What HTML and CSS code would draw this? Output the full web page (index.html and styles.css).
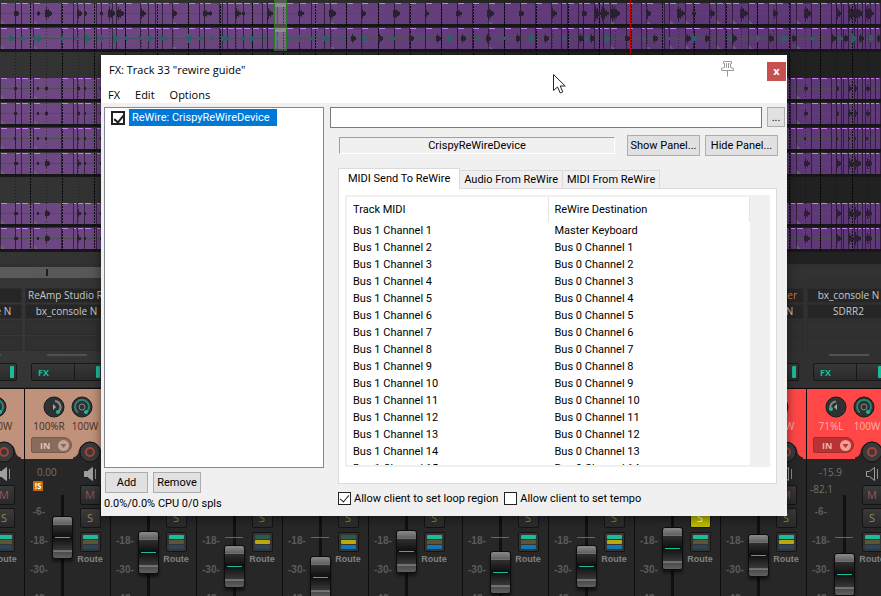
FILE: index.html
```html
<!DOCTYPE html>
<html lang="en">
<head>
    <meta charset="UTF-8">
    <meta name="viewport" content="width=device-width, initial-scale=1.0">
    <title>FX: Track 33</title>
    <link rel="stylesheet" href="styles.css">
</head>
<body>
    <div class="daw">
        <div class="arrange" id="arrange">
            <div class="loop-marker"></div>
            <div class="playhead"></div>
        </div>
        <div class="scrollbar"><div class="scroll-mark"></div></div>
        <div class="mixer" id="mixer"></div>
    </div>

    <div class="window">
        <div class="titlebar">
            <span class="title">FX: Track 33 "rewire guide"</span>
            <svg class="pin" width="15" height="16" viewBox="0 0 15 16" fill="#fff" stroke="#999">
                <path d="M3.5 0.5h8v2h-1v4l3 1v2h-12v-2l3-1v-4h-1z"/>
                <path d="M7.5 9.5v6M6.5 2v5M8.5 2v5"/>
            </svg>
            <button class="close" type="button" aria-label="Close">x</button>
        </div>
        <div class="menu">
            <span>FX</span>
            <span>Edit</span>
            <span>Options</span>
        </div>
        <div class="content">
            <div class="chain">
                <div class="fx-list">
                    <label class="fx-item">
                        <input class="fx-check" type="checkbox" checked>
                        <span class="fx-name">ReWire: CrispyReWireDevice</span>
                    </label>
                </div>
                <div class="chain-buttons">
                    <button class="btn" type="button">Add</button>
                    <button class="btn" type="button">Remove</button>
                </div>
                <div class="cpu">0.0%/0.0% CPU 0/0 spls</div>
            </div>
            <div class="plugin">
                <div class="preset-row">
                    <input class="preset" type="text" aria-label="Preset">
                    <button class="btn more" type="button">...</button>
                </div>
                <div class="device-row">
                    <div class="device">CrispyReWireDevice</div>
                    <button class="btn panel-btn" type="button">Show Panel...</button>
                    <button class="btn panel-btn" type="button">Hide Panel...</button>
                </div>
                <div class="tabs">
                    <button class="tab active" type="button">MIDI Send To ReWire</button>
                    <button class="tab" type="button">Audio From ReWire</button>
                    <button class="tab" type="button">MIDI From ReWire</button>
                </div>
                <div class="tab-page">
                    <div class="list-view">
                        <table class="routing">
                            <thead>
                                <tr><th>Track MIDI</th><th>ReWire Destination</th></tr>
                            </thead>
                            <tbody id="routing"></tbody>
                        </table>
                    </div>
                </div>
                <div class="options">
                    <label class="option"><input class="option-check" type="checkbox" checked>Allow client to set loop region</label>
                    <label class="option"><input class="option-check" type="checkbox">Allow client to set tempo</label>
                </div>
            </div>
        </div>
    </div>

    <svg class="cursor" width="13" height="20" viewBox="0 0 13 20">
        <path d="M0.5 0.5v16l4-3.5 2.7 6 2.6-1.2-2.6-5.8h5z" fill="#fff" stroke="#222"/>
    </svg>

    <script src="script.js"></script>
</body>
</html>
```
FILE: styles.css
```css
* {
    box-sizing: border-box;
}

body {
    margin: 0;
    background-color: #272727;
    font-family: Roboto, "Liberation Sans", sans-serif;
    font-size: 11px;
    overflow: hidden;
}

button, input {
    font: inherit;
    margin: 0;
}

.daw {
    position: relative;
    display: flex;
    flex-direction: column;
    min-height: 100vh;
}

/* Tracks */
.arrange {
    position: relative;
    padding-top: 3px;
    padding-bottom: 11px;
    background: linear-gradient(90deg, #343434, #2c2c2c 40%, #212121 65%);
}

.lane {
    display: block;
    width: 100%;
    height: 25px;
}

.loop-marker {
    position: absolute;
    left: 274px;
    top: 0;
    width: 13px;
    height: 51px;
    border-left: 1px solid #2c7a26;
    border-right: 1px solid #2c7a26;
    background:
        linear-gradient(#8c8c8c, #8c8c8c) 0 3px / 100% 4px no-repeat,
        linear-gradient(#8c8c8c, #8c8c8c) 0 28px / 100% 4px no-repeat,
        rgba(190, 190, 180, 0.3);
}

.playhead {
    position: absolute;
    left: 630px;
    top: 0;
    width: 1px;
    height: 55px;
    background-color: #c00000;
}

.scrollbar {
    height: 14px;
    padding: 5px 0 0 46px;
    border-top: 3px solid #303030;
    background: linear-gradient(90deg, #5b5b5b, #4a4a4a 50%, #323232 80%);
}

.scroll-mark {
    width: 2px;
    height: 7px;
    margin-top: -3px;
    background-color: #1e1e1e;
}

/* Mixer */
.mixer {
    display: flex;
    flex: 1;
    height: 318px;
    margin-left: -62px;
    overflow: hidden;
    background: linear-gradient(90deg, #363636, #303030) top / 100% 110px no-repeat #272727;
    font-family: "Open Sans", "Noto Sans", sans-serif;
}

.strip {
    flex: none;
    width: 86px;
}

.strip.gap {
    width: 94px;
    padding-left: 8px;
}

.inserts {
    height: 110px;
    padding: 10px 2px 0 1px;
    border-bottom: 1px solid #2c2c2c;
}

.slot {
    height: 15px;
    margin-bottom: 1px;
    padding: 0 2px;
    border: 1px solid #2d2d2d;
    background-color: #262626;
    color: #c8c8c8;
    font-size: 10px;
    line-height: 13px;
    text-align: center;
    white-space: nowrap;
    overflow: hidden;
}

.slot.empty {
    background-color: #303030;
}

.slot.offline {
    padding-right: 6px;
    color: #d0803c;
    text-align: right;
}

.send-bar {
    width: 40px;
    height: 2px;
    margin: 3px 0 7px 22px;
    background-color: #505050;
}

.fx-button {
    display: flex;
    align-items: center;
    width: 72px;
    height: 18px;
    margin-left: 6px;
    padding: 0 2px 0 6px;
    border: 1px solid #181818;
    border-radius: 2px;
    background: linear-gradient(90deg, transparent 42px, #181818 42px, #181818 43px, transparent 43px), linear-gradient(#383838, #2a2a2a);
    color: #1abc9c;
    font-size: 9px;
    font-weight: bold;
}

.fx-led {
    width: 4px;
    height: 12px;
    margin-left: auto;
    border-radius: 1px;
    background-color: #1abc9c;
}

.head {
    height: 71px;
    padding: 7px 0 0 6px;
    border-top: 1px solid #0c0c0c;
    border-left: 1px solid #0c0c0c;
    background-color: #c0927b;
    color: #4a2d1e;
}

.head.red {
    background-color: #ff4747;
    color: #ffb0a8;
}

.knobs {
    display: flex;
    gap: 6px;
    margin-left: 12px;
}

.knob {
    display: block;
    width: 22px;
    height: 22px;
}

.knob-labels {
    display: flex;
    width: 72px;
    font-size: 10px;
    line-height: 16px;
    white-space: nowrap;
}

.knob-labels span {
    flex: 1;
    text-align: center;
}

.head-bottom {
    display: flex;
    align-items: flex-start;
}

.input-button {
    display: flex;
    align-items: center;
    justify-content: space-between;
    width: 41px;
    height: 16px;
    margin-top: 3px;
    padding: 0 2px 0 8px;
    border: 1px solid #76594c;
    border-radius: 2px 8px 8px 2px;
    background-color: #8a6a5a;
    color: #dcc4b8;
    font-size: 9px;
    font-weight: bold;
}

.red .input-button {
    border-color: #9a2c2c;
    background-color: #b83434;
    color: #f0b0a8;
}

.record {
    display: block;
    flex: none;
    width: 34px;
    height: 30px;
    margin: 4px 0 0 1px;
}

.channel {
    display: flex;
    height: 137px;
    padding-top: 1px;
    border-left: 1px solid #0e0e0e;
}

.meter {
    width: 27px;
    padding-top: 4px;
    color: #5c5c5c;
    font-size: 9px;
}

.volume, .peak {
    height: 16px;
    padding-left: 12px;
    font-size: 10px;
    line-height: 16px;
    color: #707070;
    white-space: nowrap;
}

.peak {
    padding-left: 3px;
}

.solo-badge {
    display: block;
    width: 10px;
    height: 10px;
    margin-left: 8px;
    border-radius: 1px;
    background-color: #c46a08;
    color: #fff;
    font-size: 8px;
    font-weight: bold;
    line-height: 10px;
    text-align: center;
}

.warn {
    height: 26px;
    padding-top: 1px;
}

.tick {
    height: 29px;
    padding-left: 5px;
    font-family: "Liberation Sans", sans-serif;
    font-size: 10px;
    font-weight: bold;
    line-height: 12px;
    white-space: nowrap;
}

.fader-column {
    position: relative;
    width: 21px;
    margin-top: 35px;
    background: linear-gradient(#101010, #101010) center / 3px 100% no-repeat;
}

.unity {
    position: absolute;
    left: 1px;
    top: 42px;
    width: 18px;
    height: 1px;
    background-color: #666;
}

.fader {
    position: absolute;
    left: 0;
    width: 21px;
    height: 43px;
    border: 1px solid #0c0c0c;
    border-radius: 3px;
    background:
        linear-gradient(#1abc9c, #1abc9c) center 20px / 15px 1px no-repeat,
        linear-gradient(#8a8a8a 0, #606060 7px, #b0b0b0 7px, #2f2f2f 8px, #0f0f0f 20px, #383838 33px, #a0a0a0 34px, #4a4a4a 35px, #606060 100%);
    box-shadow: 0 3px 3px rgba(0, 0, 0, 0.5);
}

.controls {
    display: flex;
    flex-direction: column;
    align-items: center;
    width: 34px;
    padding-top: 7px;
}

.speaker {
    display: block;
    width: 13px;
    height: 14px;
    margin-bottom: 4px;
}

.square {
    width: 21px;
    height: 20px;
    margin-bottom: 3px;
    padding: 0;
    border: 1px solid #141414;
    border-radius: 2px;
    background: linear-gradient(#3a3a3a, #2a2a2a);
    font-size: 11px;
    line-height: 16px;
}

.mute {
    color: #94545a;
}

.solo {
    color: #908a48;
}

.solo.on {
    background: #bcbc00;
    color: #fff;
}

.route {
    display: flex;
    flex-direction: column;
    gap: 1px;
    width: 21px;
    height: 20px;
    margin: 1px 0 0;
    padding: 2px;
    border: 1px solid #141414;
    border-radius: 2px;
    background-color: #343434;
}

.route i {
    display: block;
    width: 15px;
    height: 4px;
    border-radius: 1px;
}

.teal { background-color: #1abc9c; }
.teal-dim { background-color: #2c5a4e; }
.yellow { background-color: #bca80e; }
.yellow-dim { background-color: #5c5634; }
.blue { background-color: #0e78b8; }
.blue-dim { background-color: #2a4658; }

.route-label {
    color: #828282;
    font-family: "Liberation Sans", sans-serif;
    font-size: 9px;
    font-weight: bold;
    line-height: 14px;
}

/* FX window */
.window {
    position: absolute;
    left: 101px;
    top: 55px;
    width: 686px;
    background-color: #f0f0f0;
    color: #000;
    box-shadow: 0 2px 10px rgba(0, 0, 0, 0.5);
}

.titlebar {
    display: flex;
    align-items: center;
    height: 30px;
    padding: 0 1px 0 8px;
    background-color: #fff;
    font-family: "Open Sans", "Noto Sans", sans-serif;
}

.title {
    flex: 1;
    padding-bottom: 1px;
}

.pin {
    margin: 0 32px 2px 0;
}

.close {
    width: 19px;
    height: 19px;
    margin-top: 3px;
    padding: 0 0 2px;
    border: none;
    background-color: #c75050;
    color: #fff;
    font-weight: bold;
    line-height: 16px;
}

.menu {
    display: flex;
    gap: 15px;
    height: 18px;
    padding-left: 7px;
    background-color: #fff;
    font-family: "Open Sans", "Noto Sans", sans-serif;
    line-height: 20px;
}

.content {
    display: grid;
    grid-template-columns: 220px 1fr;
    gap: 6px;
    padding: 4px 2px 3px 3px;
}

.chain {
    display: flex;
    flex-direction: column;
}

.fx-list {
    height: 361px;
    padding: 1px 6px;
    border: 1px solid #828790;
    background-color: #fff;
}

.fx-item {
    display: flex;
    align-items: center;
    gap: 4px;
}

.fx-check, .option-check {
    appearance: none;
    flex: none;
    width: 13px;
    height: 13px;
    border: 1px solid #222;
    background-color: #fff;
}

.fx-check {
    width: 14px;
    height: 14px;
    border: 2px solid #222;
}

.fx-check:checked::before, .option-check:checked::before {
    content: "";
    display: block;
    width: 4px;
    height: 8px;
    margin: 0 0 0 3px;
    border: solid #222;
    border-width: 0 1px 1px 0;
    transform: rotate(40deg);
}

.fx-check:checked::before {
    border-width: 0 2px 2px 0;
}

.fx-name {
    padding: 0 7px 0 3px;
    background-color: #0078d7;
    color: #fff;
    line-height: 17px;
}

.chain-buttons {
    display: flex;
    gap: 5px;
    margin: 4px 0 2px 1px;
}

.btn {
    height: 21px;
    padding: 0;
    border: 1px solid #adadad;
    background-color: #e1e1e1;
    color: #000;
    text-align: center;
}

.chain-buttons .btn {
    width: 43px;
}

.chain-buttons .btn:last-child {
    width: 48px;
}

.cpu {
    line-height: 18px;
}

.preset-row {
    display: flex;
    gap: 5px;
}

.preset {
    flex: 1;
    height: 21px;
    border: 1px solid #7a7a7a;
    background-color: #fff;
}

.more {
    width: 18px;
    height: 20px;
}

.device-row {
    display: flex;
    align-items: center;
    gap: 5px;
    padding: 7px 7px 0 9px;
}

.device {
    flex: 1;
    margin-right: 7px;
    border: 1px solid;
    border-color: #a0a0a0 #fff #fff #a0a0a0;
    line-height: 15px;
    text-align: center;
}

.panel-btn {
    width: 73px;
}

.tabs {
    display: flex;
    align-items: flex-end;
    margin: 12px 0 0 8px;
}

.tab {
    height: 18px;
    padding: 0 4px;
    border: 1px solid #dadada;
    border-bottom: none;
    border-left: none;
    background-color: #f0f0f0;
    color: #000;
}

.tab.active {
    height: 21px;
    margin-bottom: -1px;
    padding: 0 9px 2px;
    border-left: 1px solid #dadada;
    background-color: #fff;
    z-index: 1;
}

.tab-page {
    margin: 0 8px;
    padding: 6px 6px 16px;
    border: 1px solid #dadada;
    background-color: #fff;
}

.list-view {
    height: 272px;
    padding-right: 18px;
    border: 2px solid #f0f0f0;
    background: linear-gradient(#f0f0f0, #f0f0f0) right / 18px 100% no-repeat #fff;
    overflow: hidden;
}

.routing {
    width: 100%;
    table-layout: fixed;
    border-spacing: 0;
}

.routing th {
    height: 25px;
    padding: 0 6px;
    border-right: 1px solid #e5e5e5;
    font-weight: normal;
    text-align: left;
}

.routing td {
    height: 17px;
    padding: 0 6px 1px;
}

.options {
    display: flex;
    gap: 6px;
    margin: 8px 0 0 8px;
}

.option {
    display: flex;
    align-items: center;
    gap: 3px;
}

.cursor {
    position: absolute;
    left: 553px;
    top: 74px;
}
```
FILE: script.js
```js
// Bus / channel table
const rows = [];
for (let i = 1; i <= 15; i++) {
    const dest = i === 1 ? 'Master Keyboard' : `Bus 0 Channel ${i - 1}`;
    rows.push(`<tr><td>Bus 1 Channel ${i}</td><td>${dest}</td></tr>`);
}
document.getElementById('routing').innerHTML = rows.join('');

// Item edges shared by all the grouped tracks
const cuts = [0, 15, 21, 33, 61, 73, 77, 84, 96, 101, 112, 116, 125, 140, 148, 155, 162, 172, 188, 199, 204, 219, 222, 227, 235, 243, 252, 262, 267, 277, 286, 299, 311, 324, 330, 346, 361, 378, 394, 409, 425, 441, 457, 472, 488, 504, 520, 535, 551, 561, 567, 578, 583, 594, 599, 603, 610, 626, 641, 646, 664, 669, 685, 693, 709, 716, 725, 732, 748, 757, 768, 776, 790, 796, 811, 820, 831, 836, 841, 843, 848, 854, 857, 862, 865, 870, 875, 880];
const fades = [0, 33, 172, 330, 488, 610, 646, 669, 685, 716, 732, 748, 796];
const hits = [[15, 4], [38, 2], [46, 6], [78, 4], [85, 2], [101, 2], [109, 6], [118, 6], [141, 5], [173, 4], [204, 5], [210, 2], [236, 5], [243, 2], [268, 5], [299, 5], [330, 6], [362, 4], [394, 6], [426, 3], [457, 5], [488, 6], [520, 4], [552, 5], [583, 4], [595, 7], [602, 7], [612, 8], [647, 4], [678, 7], [693, 3], [711, 4], [741, 7], [774, 4], [805, 7], [837, 5], [849, 7], [855, 8], [867, 7]];
const tealHits = [10, 22, 34, 38, 62, 75, 86, 98, 101, 114, 126, 139, 149, 160, 165, 188, 200, 211, 223, 228, 242, 251, 264, 276, 286, 299, 312, 325, 341, 352, 363, 379, 392, 410, 421, 437, 449, 462, 478, 487, 503, 517, 530, 545, 563, 580, 586, 591, 606, 626, 643, 654, 667, 687, 693, 706, 730, 733, 757, 770, 783, 793, 812, 832, 840, 845, 852, 860, 870, 878];

function wave(x, amp) {
    let d = '';
    for (let i = -1; i < amp; i++) {
        const h = Math.max(1, Math.round((amp - Math.abs(i)) * (i % 2 ? 0.6 : 1)));
        d += `M${x + i + 0.5} ${10 - h}v${h * 2 + 1}`;
    }
    return d;
}

function grid(height) {
    let out = '';
    for (let i = 0; i < 56; i++) {
        const x = Math.round(14.5 + i * 15.8) + 0.5;
        const major = i % 2;
        out += `<path d="M${x} 0V${height}" stroke="#000" stroke-opacity="${major ? 0.9 : 0.4}" stroke-dasharray="${major ? '2 1' : '1 2'}"/>`;
    }
    return out;
}

function lane(type) {
    if (type === 'blank') {
        return `<svg class="lane">${grid(25)}</svg>`;
    }
    const scale = { full: 1, teal: 0, small: 0.4, flat: 0.1, mid: 0.7 }[type];
    let lines = '', tops = '', w = '', t = '', tri = '';
    cuts.forEach((x, i) => {
        lines += `M${x + 0.5} 0v22`;
        const len = Math.min(6, (cuts[i + 1] || x + 6) - x - 2);
        tops += `M${x + 1} 0.5h${Math.max(len, 2)}`;
    });
    fades.forEach(x => { tri += `M${x} 16l5 5h-5z`; });
    if (type === 'teal') {
        tealHits.forEach((x, i) => {
            if (x > 330 && i % 2) w += wave(x, 4);
            else t += wave(x, i % 3 ? 3 : 4);
        });
    } else {
        hits.forEach(([x, a]) => { w += wave(x, Math.max(1, Math.round(a * scale))); });
    }
    return `<svg class="lane">
        <rect width="100%" height="24" fill="#171717"/>
        <rect width="100%" height="21" fill="url(#clip)"/>
        <path d="M0 10.5H4000" stroke="#4c5050"/>
        <path d="${tri}" fill="#777" fill-opacity="0.6"/>
        <path d="${lines}" stroke="#150c1a" stroke-opacity="0.6"/>
        ${grid(24)}
        <path d="${t}" stroke="#2b6068"/>
        <path d="${w}" stroke="#2a2030"/>
        <path d="${tops}" stroke="#c57df0"/>
    </svg>`;
}

const lanes = ['full', 'teal', 'blank', 'small', 'small', 'flat', 'mid', 'blank', 'mid', 'mid'];
document.getElementById('arrange').insertAdjacentHTML('afterbegin',
    `<svg width="0" height="0" style="position:absolute"><defs><linearGradient id="clip" gradientUnits="userSpaceOnUse" x1="0" x2="600">
        <stop stop-color="#6d4883"/><stop offset="0.4" stop-color="#6a4580"/><stop offset="1" stop-color="#5f3878"/>
    </linearGradient></defs></svg>` + lanes.map(lane).join(''));

// Mixer strips: route is teal / yellow / blue, 1 when lit
const strips = [
    { slots: ['', 'bx_console N'], route: [1, 0, 0], skip: 1 },
    { slots: ['ReAmp Studio Rack', 'bx_console N'], fader: 21, pan: '100%R', vol: '0.00', badge: 1, route: [1, 0, 0] },
    { slots: ['', ''], fader: 36, route: [1, 0, 0] },
    { slots: ['', ''], fader: 50, route: [0, 1, 0] },
    { slots: ['', ''], fader: 61, route: [0, 1, 1] },
    { slots: ['', ''], fader: 35, route: [1, 0, 1] },
    { slots: ['', ''], fader: 56, route: [1, 0, 1], gap: 1 },
    { slots: ['', ''], fader: 50, route: [1, 1, 1] },
    { slots: ['', ''], fader: 32, route: [1, 0, 0], solo: 1 },
    { slots: ['er', 'bx_console N'], fader: 39, route: [1, 1, 0], red: 1, outline: 1 },
    { slots: ['bx_console N', 'SDRR2'], fader: 58, pan: '71%L', vol: '-15.9', peak: '-82.1', route: [1, 0, 0], red: 1, outline: 1, left: 1 }
];

function strip(s) {
    const colors = ['teal', 'yellow', 'blue'];
    const route = s.route.map((on, i) => `<i class="${colors[i]}${on ? '' : '-dim'}"></i>`).join('');
    const slots = s.slots.map(n => `<div class="slot${n === 'er' ? ' offline' : ''}">${n}</div>`).join('');
    const tan = s.red ? '#f0a098' : '#c4a494';
    const warn = s.peak ? `<div class="peak">${s.peak}</div>` : s.badge ? '<span class="solo-badge">!S</span>' : '';
    const pan = s.left
        ? '<path d="M5.5 13a6 6 0 0 1 5.500-7.500" fill="none" stroke="#888" stroke-width="2"/><circle cx="6" cy="13" r="2" fill="#1abc9c"/><path d="M12 8v6l-3-3z" fill="#aaa"/>'
        : '<path d="M12 5a6 6 0 0 1 4 10" fill="none" stroke="#888" stroke-width="2"/><circle cx="15" cy="16" r="2" fill="#1abc9c"/><path d="M10 8v6l3-3z" fill="#aaa"/>';
    return `<div class="strip${s.gap ? ' gap' : ''}">
        <div class="inserts">
            ${slots}<div class="slot empty"></div><div class="slot empty"></div>
            <div class="send-bar"></div>
            <div class="fx-button">FX<span class="fx-led"></span></div>
        </div>
        <div class="head${s.red ? ' red' : ''}">
            <div class="knobs">
                <svg class="knob" viewBox="0 0 22 22"><circle cx="11" cy="11" r="10" fill="#2e3232" stroke="#1a1a1a"/>${pan}</svg>
                <svg class="knob" viewBox="0 0 22 22"><circle cx="11" cy="11" r="10" fill="#2e3232" stroke="#1a1a1a"/><path d="M7 16.500a7 7 0 1 1 8 0" fill="none" stroke="#2a8672" stroke-width="2"/><circle cx="11" cy="11" r="3" fill="none" stroke="#888"/><circle cx="15" cy="16" r="2" fill="#1abc9c"/></svg>
            </div>
            <div class="knob-labels"><span>${s.pan || ''}</span><span>100W</span></div>
            <div class="head-bottom">
                <div class="input-button">IN<svg width="11" height="11" viewBox="0 0 11 11"><circle cx="5.500" cy="5.500" r="5.500" fill="${tan}"/><path d="M2.500 4h6l-3 4z" fill="${s.red ? '#b83434' : '#8a6a5a'}"/></svg></div>
                <svg class="record" viewBox="0 0 34 30">
                    <path d="M0 19.500Q5 19 6 12A11.500 11.500 0 0 1 28 12Q29 19 34 19.500V30H0z" fill="#272727"/>
                    <circle cx="17" cy="14" r="10" fill="#3a3a3a" stroke="#141414"/>
                    <circle cx="17" cy="14" r="4" fill="none" stroke="#a8443a" stroke-width="2"/>
                </svg>
            </div>
        </div>
        <div class="channel">
            <div class="meter">
                <div class="volume">${s.vol || ''}</div>
                <div class="warn">${warn}</div>
                <div class="tick">&nbsp;-6-</div>
                <div class="tick">-18-</div>
                <div class="tick">-30-</div>
                <div class="tick">-42-</div>
            </div>
            <div class="fader-column">
                ${s.fader > 42 ? '<div class="unity"></div>' : ''}
                ${s.skip ? '' : `<div class="fader" style="top:${s.fader}px"></div>`}
            </div>
            <div class="controls">
                <svg class="speaker" viewBox="0 0 13 14"><path d="M0.500 4.500h3l5-4v13l-5-4h-3z" fill="${s.outline ? 'none' : '#a0a0a0'}" stroke="#a0a0a0"/><path d="M11.500 2v10" stroke="#909090"/></svg>
                <button class="square mute" type="button">M</button>
                <button class="square solo${s.solo ? ' on' : ''}" type="button">S</button>
                <div class="route">${route}</div>
                <span class="route-label">Route</span>
            </div>
        </div>
    </div>`;
}

document.getElementById('mixer').innerHTML = strips.map(strip).join('');
```
